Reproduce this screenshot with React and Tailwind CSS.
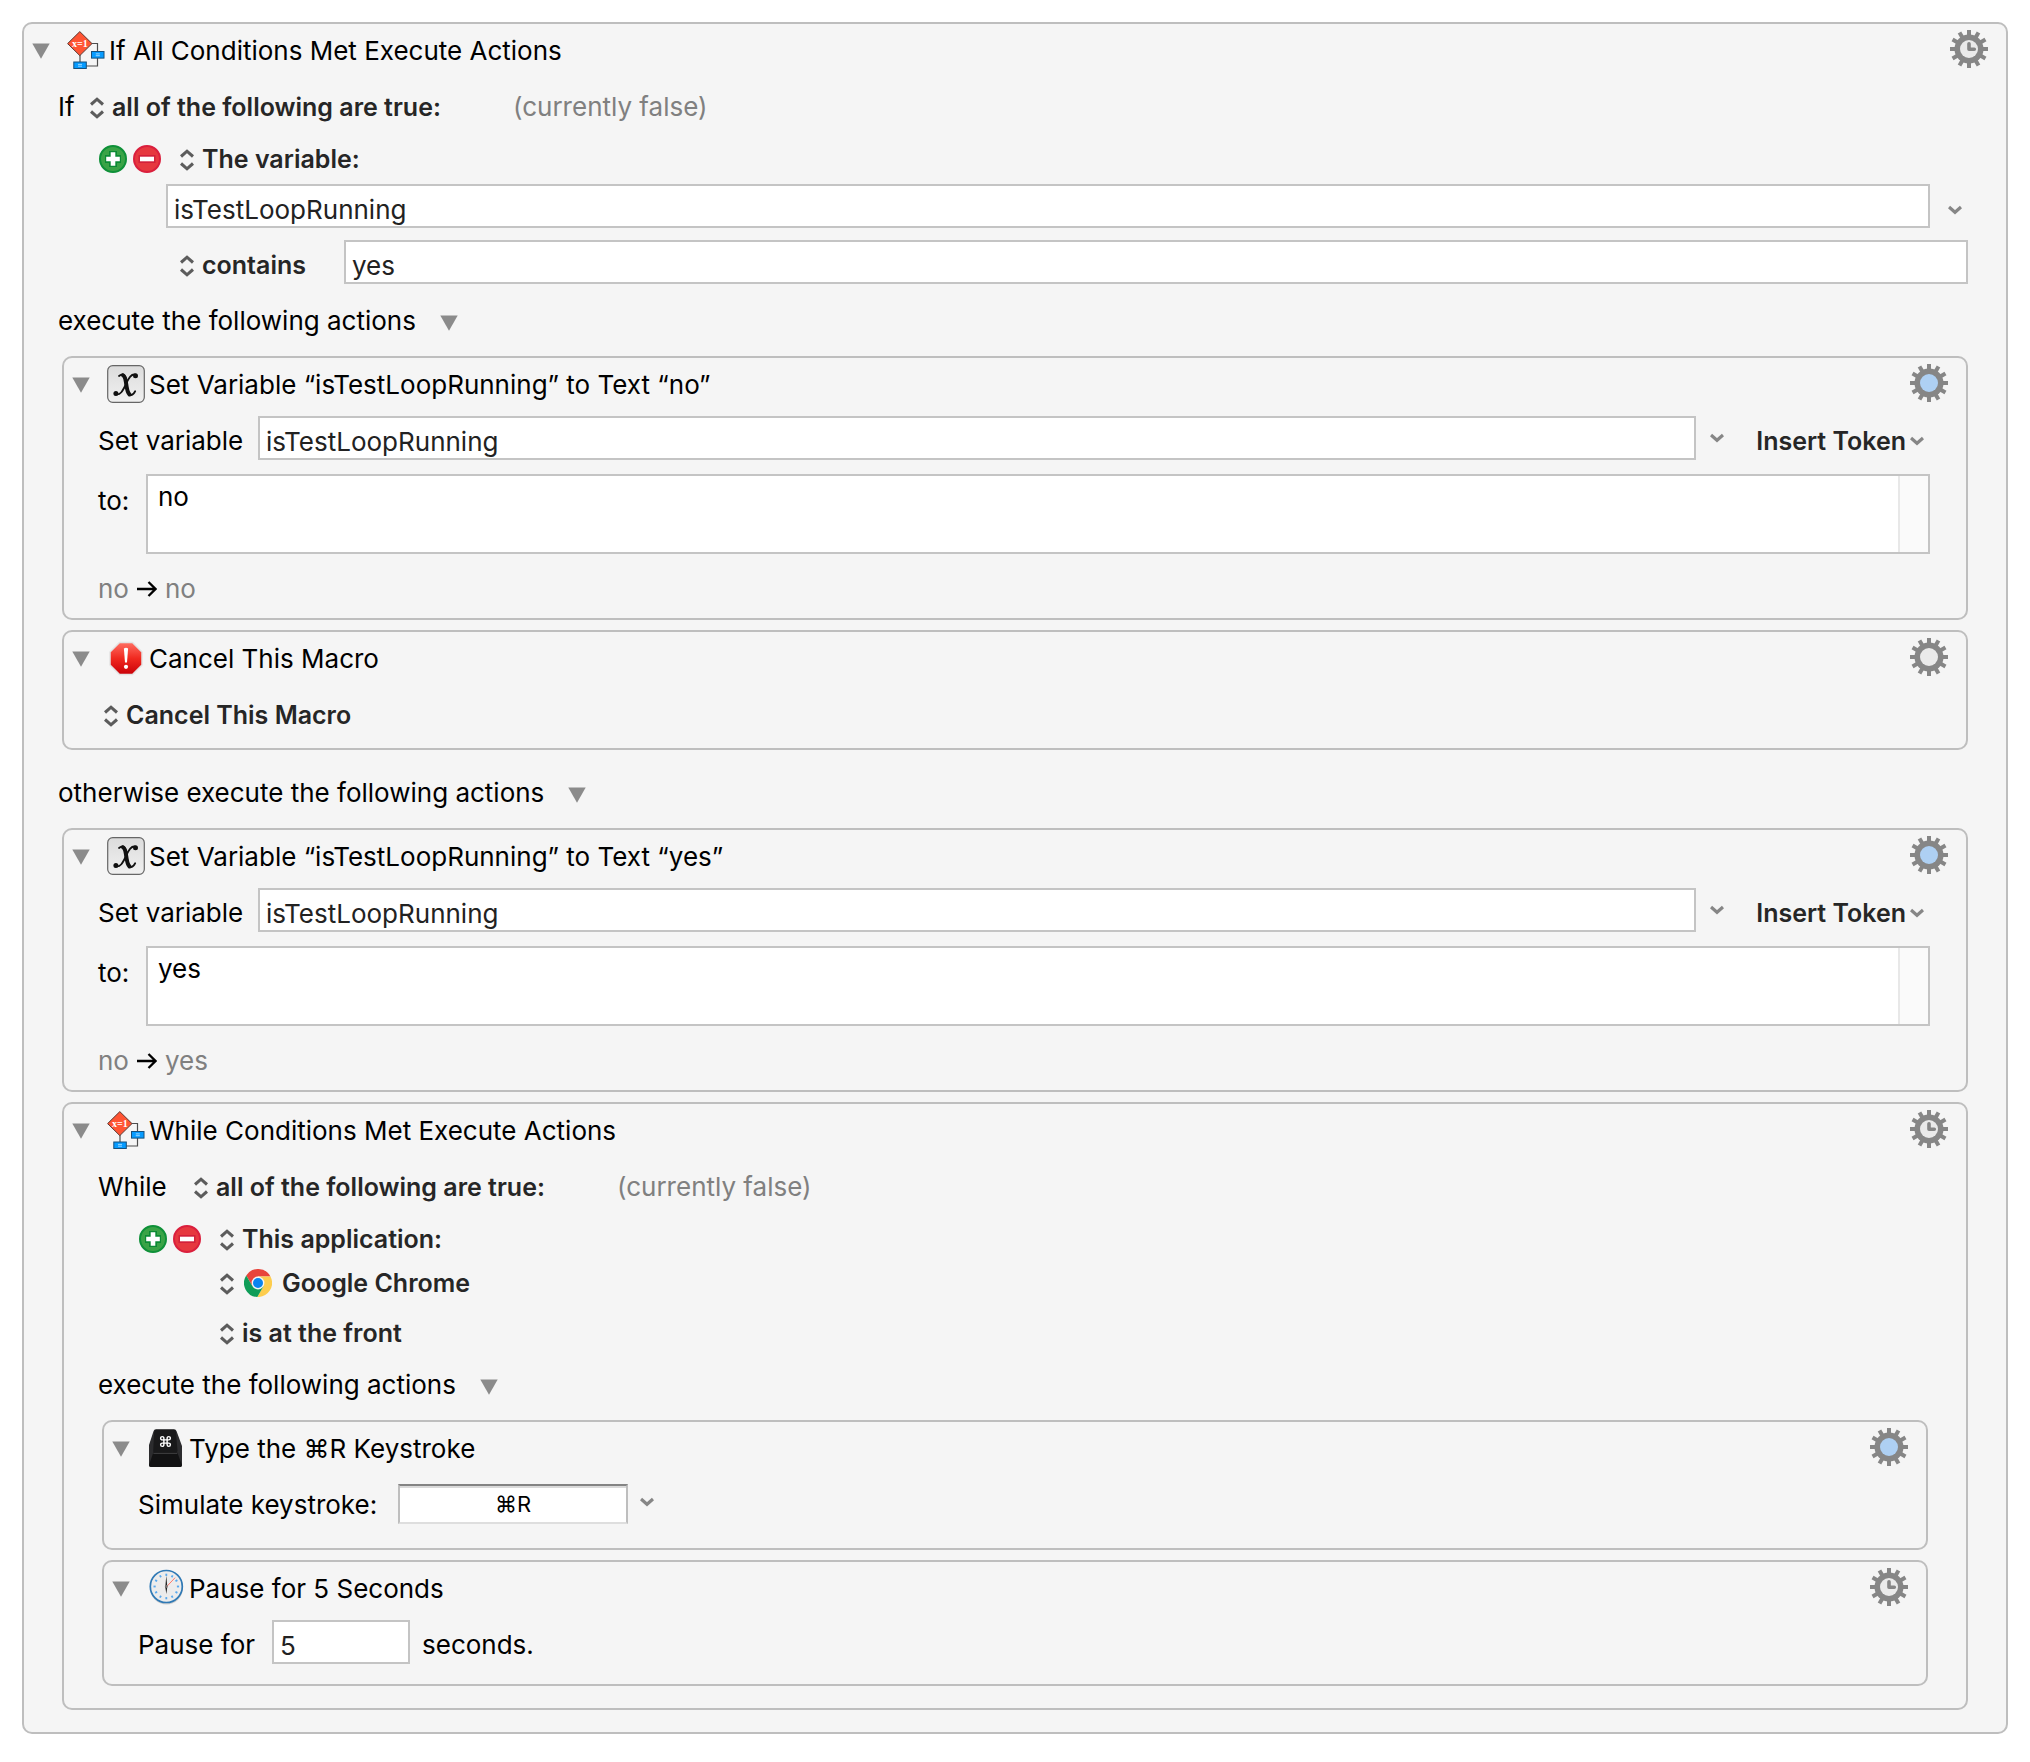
import { useId } from 'react';
import { Command } from 'lucide-react';

const TEETH = [0, 30, 60, 90, 120, 150, 180, 210, 240, 270, 300, 330];

function FlowIcon() {
  return (
    <svg width="38" height="38" viewBox="0 0 38 38" aria-hidden="true">
      <path d="M25 12.5h5.5V35H13V24" fill="none" stroke="#4d4d4d" strokeWidth="1.2" />
      <path d="M12.8 .6 25 12.6 12.8 24.6 .6 12.6Z" fill="#ff5433" stroke="#5b3a34" strokeWidth="1" />
      <text x="12.8" y="15.6" textAnchor="middle" fontSize="10" fontWeight="700" fill="#fff" fontFamily="Liberation Serif, serif">x=1</text>
      <rect x="24.5" y="20.5" width="12.5" height="6.6" fill="#069bff" stroke="#17507c" />
      <rect x="6.8" y="31" width="12.5" height="6.5" fill="#069bff" stroke="#17507c" />
      <path d="M28.8 22.9h4M28.8 24.7h4M11 33.4h4M11 35.2h4" stroke="#a8dcff" strokeWidth=".9" />
    </svg>
  );
}

function VariableIcon() {
  return (
    <svg width="38" height="38" viewBox="0 0 38 38" aria-hidden="true">
      <defs>
        <linearGradient id="variable-bg" x1="0" y1="0" x2="0" y2="1">
          <stop offset="0" stopColor="#dcdcdc" />
          <stop offset="1" stopColor="#f0f0f0" />
        </linearGradient>
      </defs>
      <rect x=".7" y=".7" width="36.6" height="36.6" rx="5" fill="url(#variable-bg)" stroke="#666" strokeWidth="1.2" />
      <g fill="none" stroke="#111" strokeLinecap="round">
        <path d="M12 11c5-3.800 7.200 0 7.900 8 .7 7.500 1.600 11.500 4.300 11 2-.3 3.200-2 4-3.800" strokeWidth="1.800" />
        <path d="M16 10.300c2 .8 2.700 4.700 3.200 8.700s1.200 8.500 3.300 10.500" strokeWidth="4" />
        <path d="M29 9.800c-5.500-1.800-7.900 5-10.200 9.700-2.700 5.500-5 11-10.300 9.800" strokeWidth="1.800" />
      </g>
      <circle cx="28.500" cy="10.700" r="2.500" fill="#111" />
      <circle cx="8.900" cy="28.500" r="2.500" fill="#111" />
    </svg>
  );
}

function StopIcon() {
  return (
    <svg width="38" height="38" viewBox="0 0 38 38" aria-hidden="true">
      <defs>
        <linearGradient id="stop-bg" x1="0" y1="0" x2="0" y2="1">
          <stop offset="0" stopColor="#ff6f63" />
          <stop offset=".5" stopColor="#f0291f" />
          <stop offset="1" stopColor="#c90008" />
        </linearGradient>
      </defs>
      <path d="M12.500 3.500h13L35 13v13l-9.500 9.500h-13L3 26V13Z" fill="url(#stop-bg)" stroke="#e3e3e3" strokeWidth="1.500" strokeLinejoin="round" />
      <path d="M16.900 9.500q2.100-1.300 4.200 0L20 23.500h-2Z" fill="#fff" />
      <circle cx="19" cy="27.800" r="2.100" fill="#fff" />
    </svg>
  );
}

function KeyIcon() {
  return (
    <span className="relative block size-[38px]">
      <svg width="38" height="38" viewBox="0 0 38 38" aria-hidden="true">
        <path d="M9 .3h18q2 0 2.600 2L35 17v19q0 2-2 2H4q-2 0-2-2V16L6.500 2.300Q7 .3 9 .3Z" fill="#2c2c2e" />
        <path d="M6.300 23.500h24L35 36q0 2-2 2H4q-2 0-2-2Z" fill="#121213" />
        <path d="M9 .8h18q1.600 0 1.900 2l1.600 19q0 2.400-2.500 2.400H8.500q-2.500 0-2.300-2.400l1-19Q7.500.8 9 .8Z" fill="#19191a" />
        <path d="M6.400 24.400h23.800" stroke="#4b4b4d" strokeWidth=".8" />
      </svg>
      <Command className="absolute top-1.5 left-3 size-[13px] text-white" strokeWidth={2.6} aria-hidden="true" />
    </span>
  );
}

function ClockIcon() {
  return (
    <svg width="38" height="38" viewBox="0 0 38 38" aria-hidden="true">
      <circle cx="19.500" cy="19" r="16.500" fill="#cfcfcf" />
      <circle cx="19.300" cy="17.500" r="16" fill="#ececec" stroke="#2f79b5" strokeWidth="1.700" />
      {TEETH.map((deg) => (
        <path key={deg} d="M19.300 4.700v2.200" stroke="#58a9ee" strokeWidth="1.800" transform={`rotate(${deg} 19.300 17.500)`} />
      ))}
      <path d="m18.300 19 9.800-10.300" stroke="#ff7a6b" strokeWidth="1" />
      <path d="M19.300 6.500 20.300 18l-1 7-1-7Z" fill="#222" />
      <circle cx="19.300" cy="17.500" r="1.400" fill="#777" />
    </svg>
  );
}

function ChromeIcon() {
  return (
    <svg width="28" height="28" viewBox="0 0 28 28" aria-hidden="true">
      <path d="M2.230 6.420A14 14 0 0 1 26.450 7.600H14L8.460 17.200Z" fill="#e8453c" />
      <path d="M26.450 7.600A14 14 0 0 1 13.300 28l6.240-10.800L14 7.600Z" fill="#fdcd4e" />
      <path d="M13.300 28A14 14 0 0 1 2.230 6.420L8.460 17.200h11.080Z" fill="#0f9d58" />
      <circle cx="14" cy="14" r="6.400" fill="#f5f5f5" />
      <circle cx="14" cy="14" r="5" fill="#0a84f0" />
    </svg>
  );
}

function Gear({ face }) {
  return (
    <svg width="38" height="38" viewBox="0 0 38 38" aria-hidden="true">
      {TEETH.map((deg) => (
        <path key={deg} d="M17 0h4v8h-4z" fill="#868686" transform={`rotate(${deg} 19 19)`} />
      ))}
      <circle cx="19" cy="19" r="14.500" fill="#868686" />
      <circle cx="19" cy="19" r="9" fill={face === 'blue' ? '#aed0f3' : '#eaeaea'} />
      {face === 'clock' && (
        <path d="M19 13.700v5.500h5.300" fill="none" stroke="#868686" strokeWidth="3.600" strokeLinecap="round" strokeLinejoin="round" />
      )}
    </svg>
  );
}

function Triangle({ label, className = '' }) {
  return (
    <button type="button" aria-label={label} aria-expanded="true" className={`shrink-0 ${className}`}>
      <svg width="18" height="16" viewBox="0 0 18 16" aria-hidden="true">
        <path d="M.3 .5h17.400L9 15.700Z" fill="#8b8b8b" />
      </svg>
    </button>
  );
}

function Chevron() {
  return (
    <svg width="14" height="10" viewBox="0 0 14 10" aria-hidden="true">
      <path d="m1 2 6 5.300L13 2" fill="none" stroke="#868686" strokeWidth="3.200" />
    </svg>
  );
}

function MenuButton({ label, className }) {
  return (
    <button type="button" aria-label={label} className={`flex shrink-0 items-center justify-center ${className}`}>
      <Chevron />
    </button>
  );
}

function Popup({ value, label, icon, className = '' }) {
  return (
    <label className={`flex shrink-0 items-center ${className}`}>
      <svg width="14" height="22" viewBox="0 0 14 22" className="mt-0.5 shrink-0" aria-hidden="true">
        <path d="m1 7.500 6-5.300 6 5.300M1 14.500l6 5.300 6-5.300" fill="none" stroke="#5c5c5c" strokeWidth="3.100" />
      </svg>
      {icon && <span className="ml-2.5 mr-0.5">{icon}</span>}
      <select aria-label={label} className="ml-2 appearance-none bg-transparent text-[25px] font-semibold text-[#262626] outline-none">
        <option>{value}</option>
      </select>
    </label>
  );
}

function AddRemove() {
  return (
    <div className="mr-[19px] flex gap-[6px]">
      <button type="button" aria-label="Add condition">
        <svg width="28" height="28" viewBox="0 0 28 28" aria-hidden="true">
          <circle cx="14" cy="14" r="13" fill="#3aa346" stroke="#0e9038" strokeWidth="2" />
          <path d="M14 6v16M6 14h16" stroke="#0b8a34" strokeWidth="8" />
          <path d="M14 7.200v13.600M7.200 14h13.600" stroke="#fff" strokeWidth="4.600" />
        </svg>
      </button>
      <button type="button" aria-label="Remove condition">
        <svg width="28" height="28" viewBox="0 0 28 28" aria-hidden="true">
          <circle cx="14" cy="14" r="13" fill="#e6383f" stroke="#da1f3d" strokeWidth="2" />
          <path d="M5.500 14h17" stroke="#d3203a" strokeWidth="8" />
          <path d="M7 14h14" stroke="#fff" strokeWidth="4.600" />
        </svg>
      </button>
    </div>
  );
}

function Field({ className = '', ...props }) {
  return (
    <input
      type="text"
      className={`h-11 min-w-0 border-2 border-[#c4c4c4] bg-white pt-1.5 pl-1.5 text-[#222] outline-none ${className}`}
      {...props}
    />
  );
}

function ActionPanel({ title, icon, face, children, className = '' }) {
  return (
    <section className={`rounded-[10px] border-2 border-[#bebebe] bg-[#f5f5f5] ${className}`}>
      <header className="flex h-[54px] items-center pr-[18px] pl-2">
        <Triangle label={`Collapse ${title}`} />
        <span className="ml-[17px] shrink-0 pb-0.5">{icon}</span>
        <h2 className="ml-1 flex-1">{title}</h2>
        <button type="button" aria-label={`Options for ${title}`} className="pb-1">
          <Gear face={face} />
        </button>
      </header>
      {children}
    </section>
  );
}

function ConditionRow({ word, wordClass }) {
  return (
    <div className="flex h-[58px] items-center pl-[34px]">
      <span className={wordClass}>{word}</span>
      <Popup label="Condition matching" value="all of the following are true:" />
      <span className="ml-[72px] text-[#808080]">(currently false)</span>
    </div>
  );
}

function SectionLabel({ children, className = 'h-[72px] pt-0.5' }) {
  return (
    <div className={`flex items-center gap-6 pl-[34px] ${className}`}>
      <span>{children}</span>
      <Triangle label={`Collapse: ${children}`} className="pt-[3px]" />
    </div>
  );
}

function SetVariable({ value }) {
  const nameId = useId();
  const valueId = useId();

  return (
    <ActionPanel title={`Set Variable “isTestLoopRunning” to Text “${value}”`} icon={<VariableIcon />} face="blue">
      <div className="mt-1 flex h-11 items-center pl-[34px] pr-[42px]">
        <label htmlFor={nameId} className="w-40 shrink-0 pt-1.5">Set variable</label>
        <Field id={nameId} defaultValue="isTestLoopRunning" className="flex-1" />
        <MenuButton label="Choose variable" className="w-[42px]" />
        <button type="button" className="flex w-[186px] shrink-0 items-center justify-end gap-1 pt-1.5 text-[25px] font-semibold text-[#262626]">
          Insert Token
          <Chevron />
        </button>
      </div>
      <div className="mt-3.5 flex items-start pl-[34px] pr-9">
        <label htmlFor={valueId} className="mt-3 w-12 shrink-0">to:</label>
        <div className="flex h-20 flex-1 border-2 border-[#c4c4c4] bg-white">
          <textarea id={valueId} defaultValue={value} className="flex-1 resize-none pt-1.5 pl-2.5 outline-none" />
          <div className="w-[30px] border-l-2 border-[#e8e8e8] bg-[#fafafa]" />
        </div>
      </div>
      <p className="mt-1.5 flex h-[58px] items-center gap-2 pl-[34px] text-[#808080]">
        no
        <svg width="20" height="18" viewBox="0 0 20 18" aria-hidden="true">
          <path d="M0 9h18M11.500 2l7 7-7 7" fill="none" stroke="#000" strokeWidth="2.300" />
        </svg>
        {value}
      </p>
    </ActionPanel>
  );
}

function CancelMacro() {
  return (
    <ActionPanel title="Cancel This Macro" icon={<StopIcon />} face="plain" className="pb-1">
      <div className="flex h-[58px] items-center pl-10">
        <Popup label="Cancel target" value="Cancel This Macro" />
      </div>
    </ActionPanel>
  );
}

function TypeKeystroke() {
  const id = useId();

  return (
    <ActionPanel title="Type the ⌘R Keystroke" icon={<KeyIcon />} face="blue" className="pb-4">
      <div className="flex h-14 items-center pl-[34px]">
        <label htmlFor={id} className="w-[260px] pt-0.5">Simulate keystroke:</label>
        <input
          id={id}
          type="text"
          defaultValue="⌘R"
          className="h-10 w-[230px] border-2 border-[#bebebe] border-t-[#848484] border-b-[#dedede] bg-white text-center text-[22px] shadow-[inset_0_2px_0_#dadada] outline-none"
        />
        <MenuButton label="Choose keystroke" className="w-[38px] pb-1" />
      </div>
    </ActionPanel>
  );
}

function Pause() {
  const id = useId();

  return (
    <ActionPanel title="Pause for 5 Seconds" icon={<ClockIcon />} face="clock" className="pb-5">
      <div className="mt-1 flex h-11 items-center pl-[34px]">
        <label htmlFor={id} className="w-[134px] pt-1.5">Pause for</label>
        <Field id={id} defaultValue="5" className="w-[138px]" />
        <span className="ml-3 pt-1.5">seconds.</span>
      </div>
    </ActionPanel>
  );
}

function WhileLoop() {
  return (
    <ActionPanel title="While Conditions Met Execute Actions" icon={<FlowIcon />} face="clock" className="pb-[22px]">
      <ConditionRow word="While" wordClass="w-24" />
      <div className="flex h-[46px] items-center pl-[75px]">
        <AddRemove />
        <Popup label="Condition type" value="This application:" />
      </div>
      <div className="flex h-[42px] items-center pl-[156px]">
        <Popup label="Application" value="Google Chrome" icon={<ChromeIcon />} />
      </div>
      <div className="flex h-11 items-center pt-3.5 pl-[156px]">
        <Popup label="Application state" value="is at the front" />
      </div>
      <SectionLabel>execute the following actions</SectionLabel>
      <div className="flex flex-col gap-2.5 px-[38px]">
        <TypeKeystroke />
        <Pause />
      </div>
    </ActionPanel>
  );
}

export default function App() {
  return (
    <main className="min-h-screen bg-white p-[22px] font-['Inter','DejaVu_Sans',sans-serif] text-[26px] leading-[30px] text-black">
      <ActionPanel title="If All Conditions Met Execute Actions" icon={<FlowIcon />} face="clock" className="pb-[22px]">
        <ConditionRow word="If" wordClass="w-8" />
        <div className="flex h-[46px] items-center pl-[75px]">
          <AddRemove />
          <Popup label="Condition type" value="The variable:" />
        </div>
        <div className="mt-0.5 flex pr-[38px] pl-[142px]">
          <Field aria-label="Variable name" defaultValue="isTestLoopRunning" className="flex-1" />
          <MenuButton label="Choose variable" className="w-[38px] pt-2 pl-3" />
        </div>
        <div className="mt-3 flex items-center pr-[38px] pl-[156px]">
          <Popup label="Comparison" value="contains" className="w-[164px] pt-1.5" />
          <Field aria-label="Comparison value" defaultValue="yes" className="flex-1" />
        </div>
        <SectionLabel>execute the following actions</SectionLabel>
        <div className="flex flex-col gap-2.5 px-[38px]">
          <SetVariable value="no" />
          <CancelMacro />
        </div>
        <SectionLabel className="h-[78px] pt-2">otherwise execute the following actions</SectionLabel>
        <div className="flex flex-col gap-2.5 px-[38px]">
          <SetVariable value="yes" />
          <WhileLoop />
        </div>
      </ActionPanel>
    </main>
  );
}
